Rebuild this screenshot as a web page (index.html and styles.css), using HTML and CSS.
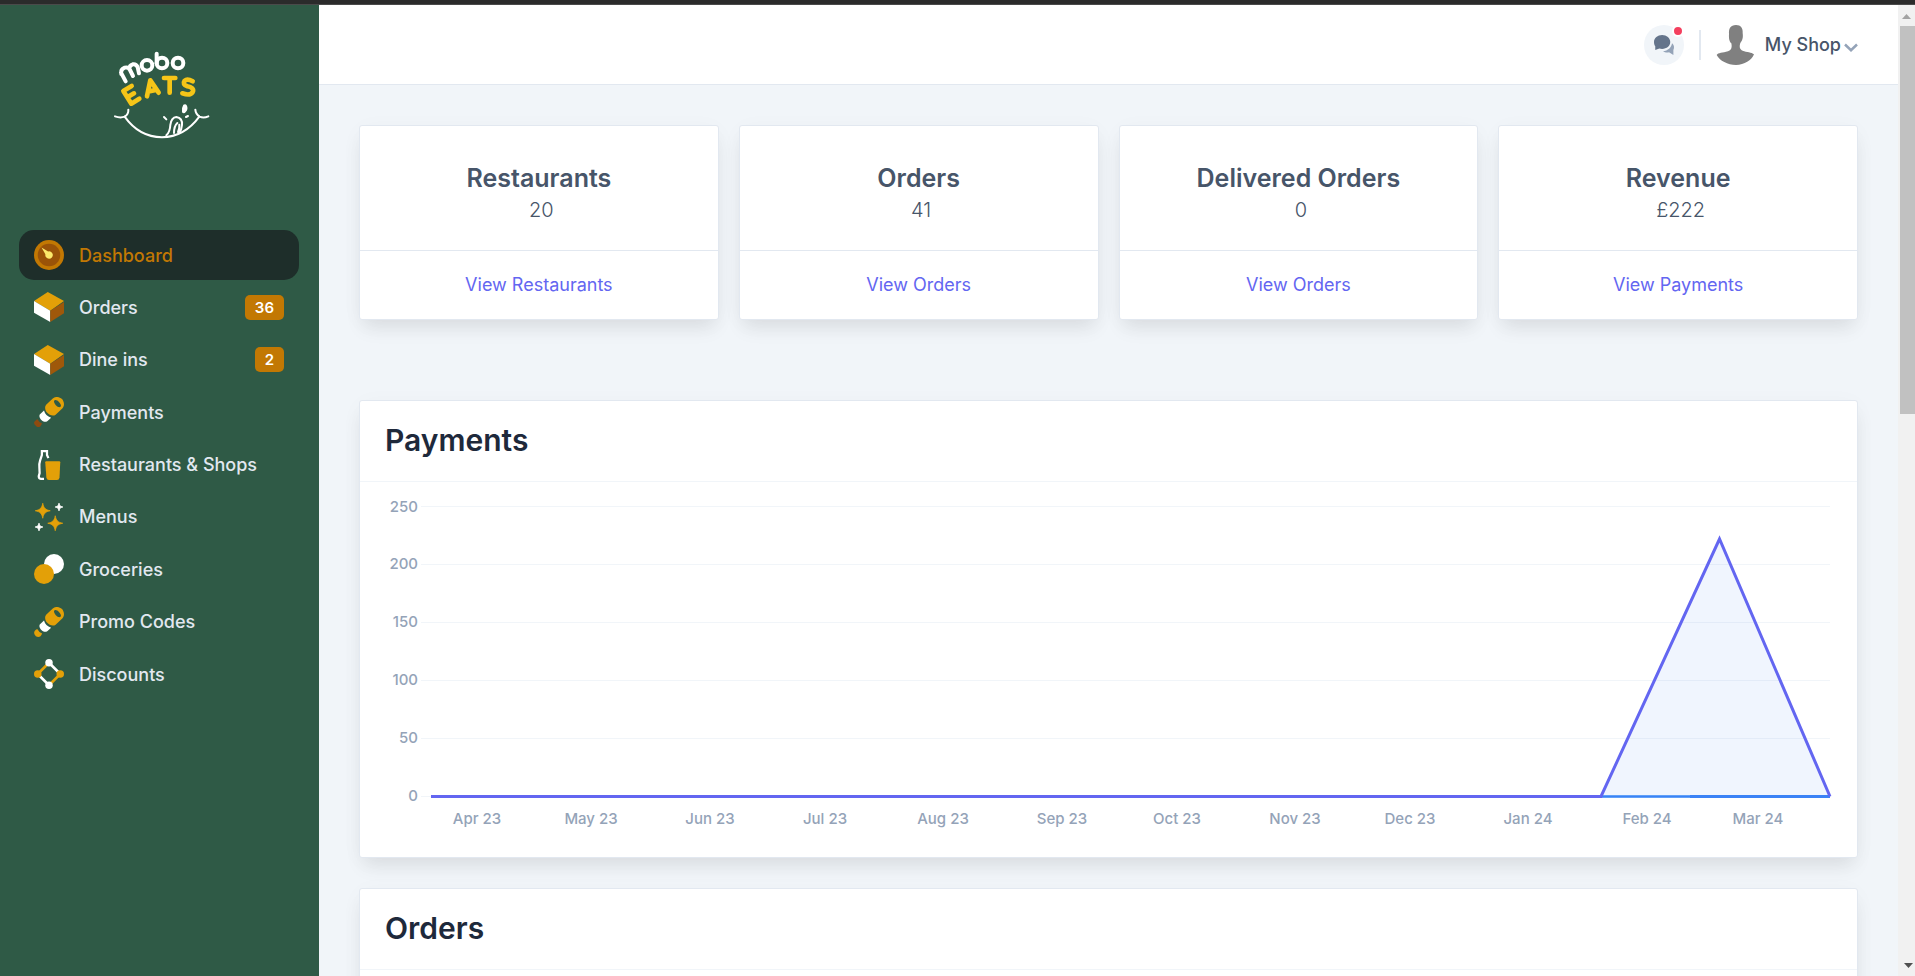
FILE: index.html
```html
<!DOCTYPE html>
<html lang="en">
<head>
<meta charset="utf-8">
<title>Mobo Eats – Dashboard</title>
<link rel="stylesheet" href="styles.css">
</head>
<body>
<div class="window-edge"></div>
<div class="app">
  <aside class="sidebar">
    <a class="logo" href="#" aria-label="mobo eats">
      <svg width="150" height="130" viewBox="0 0 450 390" fill="none" stroke-linecap="round" stroke-linejoin="round">
        <g stroke="#fff" stroke-width="12">
          <path d="M107 154 93 128M94 132q-3-14 10-19q11-3 16 7l9 18M118 116q0-10 10-13q10-2 15 8l4 19"/>
          <circle cx="171" cy="106" r="16"/>
          <path d="M200 71V100"/>
          <circle cx="216" cy="99" r="16"/>
          <circle cx="264" cy="99" r="16"/>
        </g>
        <g stroke="#f5c518" stroke-width="14">
          <path d="M125 168 100 183 124 221 148 206M112 202 132 190"/>
          <path d="M171 199 181 151 206 188M176 184 198 180"/>
          <path d="M222 144H256M239 144V188"/>
          <path d="M308 154q-16-9-24-2q-8 12 8 17q20 4 17 15q-5 15-32 6"/>
        </g>
        <g stroke="#fff" stroke-width="6">
          <path d="M75 259q16 6 29 1q12-7 11-21M316 239q1 14 13 21q12 5 26-1"/>
          <path d="M104 260q43 61 112 62q67-1 112-62"/>
          <path d="M229 316q11-10 12-31q3-23 18-24q19 3 17 24q-1 14-8 23M252 309q0-21 10-30M264 306q5-10 4-22"/>
          <path d="M222 261 229 268M288 261 294 258"/>
        </g>
        <path d="M280 224q7-4 11 3q4 11-3 18q-6 8-12 2q-2-14 4-23z" fill="#fff"/>
      </svg>
    </a>
    <nav class="nav" aria-label="Main">
      <a class="nav-item active" href="#">
        <svg class="icon" viewBox="0 0 24 24"><circle cx="12" cy="12" r="12" fill="#c27803"/><circle cx="12" cy="12" r="9" fill="#9a5308"/><path d="M12 15a3 3 0 0 1-2.900-3.700L6 6l5.300 3.100A3 3 0 1 1 12 15z" fill="#fce96a"/></svg>
        <span>Dashboard</span></a>
      <a class="nav-item" href="#">
        <svg class="icon" viewBox="0 0 24 24"><path d="M13 15 0 7.200 11 0 24 7.200z" fill="#e3a008"/><path d="M13 24 0 16.500V7.100L13 15z" fill="#fff"/><path d="M13 15 24 7.900v9L13 24z" fill="#9f580a"/></svg>
        <span>Orders</span><b class="count">36</b></a>
      <a class="nav-item" href="#">
        <svg class="icon" viewBox="0 0 24 24"><path d="M13 15 0 7.200 11 0 24 7.200z" fill="#e3a008"/><path d="M13 24 0 16.500V7.100L13 15z" fill="#fff"/><path d="M13 15 24 7.900v9L13 24z" fill="#9f580a"/></svg>
        <span>Dine ins</span><b class="count">2</b></a>
      <a class="nav-item" href="#">
        <svg class="icon" viewBox="0 0 24 24"><path d="M6.500 21.100 5 23.500Q3.500 24.500 2 23.500L.5 22Q-.5 20.500.5 19.500L2.600 17.600a7 7 0 0 0 3.900 3.500z" fill="#8e4b10"/><path d="M4.600 14 8 10.800a8 8 0 0 0 5.700 5.700L10.600 19.300a3 3 0 0 1-3 .3C5.600 18.400 3.600 16.300 4.600 14z" fill="#fff"/><path fill-rule="evenodd" d="M22.400 1.600C20 -.4 17 -.6 15 1.200L9.700 6.100c-1.800 2.300-.3 5.300.9 6.500 1.500 1.800 4.700 3.200 6.700 1.500L22.800 9c2-2.400 1.200-5.500-.4-7.400zM21.200 7.800c-.9.900-2.600-.2-3.700-1.300-1.100-1.200-2-3-1.200-3.700.9-.8 2.700.1 3.800 1.300 1.100 1.100 2 2.800 1.100 3.700z" fill="#e3a008"/></svg>
        <span>Payments</span></a>
      <a class="nav-item" href="#">
        <svg class="icon" viewBox="0 0 24 24"><path d="M11.500 6.500 10.400 4V.9H6.300V4L4.900 8.300Q4 11 4.300 14l.2 4.500-.7 2.500q0 1.700 1.400 2H8" fill="none" stroke="#fff" stroke-width="1.800"/><path d="M9 9.800q0-.8.800-.8H20.200q.8 0 .8.800L20.400 22q-.3 2-2 2H12q-1.800 0-2.100-2z" fill="#e3a008"/></svg>
        <span>Restaurants &amp; Shops</span></a>
      <a class="nav-item" href="#">
        <svg class="icon" viewBox="0 0 24 24"><path d="M7 1c.7 3.800 2.200 5.300 6 6-3.800.7-5.300 2.200-6 6-.7-3.800-2.200-5.300-6-6 3.800-.7 5.300-2.200 6-6zM17 11c.7 3.800 2.200 5.300 6 6-3.800.7-5.300 2.200-6 6-.7-3.800-2.200-5.300-6-6 3.800-.7 5.300-2.200 6-6z" fill="#e3a008" stroke="#e3a008" stroke-width=".6"/><path d="M20 1c.4 2.100.9 2.600 3 3-2.100.4-2.600.9-3 3-.4-2.100-.9-2.600-3-3 2.100-.4 2.600-.9 3-3zM4 17c.4 2.100.9 2.600 3 3-2.100.4-2.600.9-3 3-.4-2.100-.9-2.600-3-3 2.100-.4 2.600-.9 3-3z" fill="#fff" stroke="#fff" stroke-width=".8"/></svg>
        <span>Menus</span></a>
      <a class="nav-item" href="#">
        <svg class="icon" viewBox="0 0 24 24"><circle cx="16" cy="8" r="8" fill="#fff"/><circle cx="8" cy="16" r="8" fill="#e3a008"/></svg>
        <span>Groceries</span></a>
      <a class="nav-item" href="#">
        <svg class="icon" viewBox="0 0 24 24"><path d="M6.500 21.100C5.500 24 3.500 24.500 1.500 23.300-.5 21.500-.5 19 2.600 17.600a7 7 0 0 0 3.900 3.500z" fill="#e3a008"/><path d="M4.600 14 8 10.800a8 8 0 0 0 5.700 5.700L10.600 19.300a3 3 0 0 1-3 .3C5.600 18.400 3.600 16.300 4.600 14z" fill="#fff"/><path fill-rule="evenodd" d="M22.400 1.600C20 -.4 17 -.6 15 1.200L9.700 6.100c-1.800 2.300-.3 5.300.9 6.500 1.500 1.800 4.700 3.200 6.700 1.500L22.800 9c2-2.400 1.200-5.500-.4-7.400zM21.200 7.800c-.9.900-2.600-.2-3.700-1.300-1.100-1.200-2-3-1.200-3.700.9-.8 2.700.1 3.800 1.300 1.100 1.100 2 2.800 1.100 3.700z" fill="#e3a008"/></svg>
        <span>Promo Codes</span></a>
      <a class="nav-item" href="#">
        <svg class="icon" viewBox="0 0 24 24"><path d="M3 12 12 3M12 21l9-9" stroke="#e3a008" stroke-width="2"/><path d="M12 3l9 9M3 12l9 9" stroke="#fff" stroke-width="2"/><circle cx="3" cy="12" r="3" fill="#e3a008"/><circle cx="21" cy="12" r="3" fill="#e3a008"/><circle cx="12" cy="3" r="3" fill="#fff"/><circle cx="12" cy="21" r="3" fill="#fff"/></svg>
        <span>Discounts</span></a>
    </nav>
  </aside>

  <div class="content">
    <header class="topbar">
      <button class="chat" type="button" aria-label="Messages">
        <svg width="20" height="20" viewBox="0 0 16 16"><path d="M6.500 0C2.900 0 0 2.500 0 5.600c0 1.500.4 2.600 1 3.400L1 12l3.300-1.200c.7.200 1.400.3 2.200.3 3.600 0 6.500-2.400 6.500-5.500S10.100 0 6.500 0z" fill="#64748b"/><path d="M16 9.500c0-1.100-.6-2.200-1.600-3-.4 3.300-3.300 6-7.200 6.500.9.600 2.200 1 3.500 1 .5 0 .9-.1 1.300-.2L15.500 16V12c.4-.7.500-1.700.5-2.500z" fill="#94a3b8"/></svg>
        <span class="dot"></span>
      </button>
      <span class="rule"></span>
      <button class="account" type="button">
        <svg width="40" height="40" viewBox="0 0 120 120"><path d="M60 0c-17 0-22 12-21 26-1 18 2 23 7 29 3 14-1 21-10 24-16 5-30 4-34 11 9 17 33 30 58 30s47-14 54-32c-7-7-22-6-34-11-8-3-11-11-7-23 6-8 9-15 7-30C81 10 75 0 60 0z" fill="#808080"/></svg>
        <span>My Shop</span>
        <svg class="caret" width="14" height="9" viewBox="0 0 14 9"><path d="M1 1.500 7 7.200 13 1.500" fill="none" stroke="#94a3b8" stroke-width="2.500"/></svg>
      </button>
    </header>

    <main class="main">
      <section class="stats">
        <article class="card stat"><div class="stat-body"><h2>Restaurants</h2><p>20</p></div><div class="stat-foot"><a href="#">View Restaurants</a></div></article>
        <article class="card stat"><div class="stat-body"><h2>Orders</h2><p>41</p></div><div class="stat-foot"><a href="#">View Orders</a></div></article>
        <article class="card stat"><div class="stat-body"><h2>Delivered Orders</h2><p>0</p></div><div class="stat-foot"><a href="#">View Orders</a></div></article>
        <article class="card stat"><div class="stat-body"><h2>Revenue</h2><p>£222</p></div><div class="stat-foot"><a href="#">View Payments</a></div></article>
      </section>

      <section class="card panel">
        <h2 class="panel-title">Payments</h2>
        <svg class="chart" viewBox="0 0 1497 375" role="img" aria-label="Payments by month">
          <path class="grid" d="M61 24.500H1470M61 82.500H1470M61 140.500H1470M61 198.500H1470M61 256.500H1470M61 314.500H1470"/>
          <g class="y-labels">
            <text x="58" y="30">250</text><text x="58" y="87">200</text><text x="58" y="145">150</text><text x="58" y="203">100</text><text x="58" y="261">50</text><text x="58" y="319">0</text>
          </g>
          <path d="M1241 314.500 1359.500 57 1470 314.500z" fill="#3b82f6" fill-opacity=".08"/>
          <path d="M1241 314.500H1330" stroke="#60a0f8" stroke-width="3"/>
          <path d="M1241 314.500H1470" stroke="#3b82f6" stroke-width="1"/>
          <path d="M1330 314.500H1470" stroke="#3b82f6" stroke-width="3"/>
          <path class="series" d="M71 314.500H1241L1359.500 57 1470 314.500"/>
          <g class="x-labels">
            <text x="117" y="342">Apr 23</text><text x="231" y="342">May 23</text><text x="350" y="342">Jun 23</text><text x="465" y="342">Jul 23</text><text x="583" y="342">Aug 23</text><text x="702" y="342">Sep 23</text><text x="817" y="342">Oct 23</text><text x="935" y="342">Nov 23</text><text x="1050" y="342">Dec 23</text><text x="1168" y="342">Jan 24</text><text x="1287" y="342">Feb 24</text><text x="1398" y="342">Mar 24</text>
          </g>
        </svg>
      </section>

      <section class="card panel">
        <h2 class="panel-title">Orders</h2>
        <div class="panel-body"></div>
      </section>
    </main>
  </div>

  <div class="scrollbar" aria-hidden="true">
    <svg width="17" height="21" viewBox="0 0 17 21"><path d="M4 14 8.500 9 13 14z" fill="#a3a3a3"/></svg>
    <div class="thumb"></div>
    <svg class="down" width="17" height="17" viewBox="0 0 17 17"><path d="M6 4H15L10.500 9z" fill="#505050"/></svg>
  </div>
</div>
</body>
</html>
```
FILE: styles.css
```css
* { box-sizing: border-box; }

body {
  margin: 0;
  height: 100vh;
  display: flex;
  flex-direction: column;
  overflow: hidden;
  background: #f1f5f9;
  color: #475569;
  font: 400 18px/28px Inter, "Liberation Sans", sans-serif;
}

h2, p { margin: 0; }
a { color: inherit; text-decoration: none; }
button { border: 0; padding: 0; background: none; font: inherit; color: inherit; }

.window-edge {
  flex: none;
  height: 5px;
  background: #2b2b2b;
  border-bottom: 1px solid #4a4a4a;
}

.app { flex: 1; display: flex; min-height: 0; }

/* Sidebar */
.sidebar {
  flex: none;
  width: 319px;
  padding: 25px 20px 0 19px;
  background: #2f5a46;
}

.logo { display: block; height: 200px; padding-left: 71px; }
.logo svg { display: block; }

.nav {
  display: flex;
  flex-direction: column;
  justify-content: space-between;
  min-height: 469px;
}

.nav-item {
  display: flex;
  align-items: center;
  gap: 15px;
  height: 50px;
  padding: 0 15px;
  border-radius: 15px;
  color: #e2e8f0;
  font-weight: 500;
}

.nav-item.active { background: #1e2e2a; color: #c27803; }
.nav-item span { padding-top: 1px; }
.icon { flex: none; width: 30px; height: 30px; }

.count {
  margin-left: auto;
  padding: 0 10px;
  border-radius: 5px;
  background: #c27803;
  color: #fff;
  font-size: 15px;
  line-height: 25px;
  font-weight: 600;
}

/* Header */
.content { flex: 1; min-width: 0; overflow: hidden; }

.topbar {
  display: flex;
  align-items: center;
  justify-content: flex-end;
  height: 80px;
  padding: 0 40px;
  background: #fff;
  border-bottom: 1px solid #e2e8f0;
}

.chat {
  position: relative;
  display: grid;
  place-items: center;
  width: 40px;
  height: 40px;
  border-radius: 50%;
  background: #f1f5f9;
}

.dot {
  position: absolute;
  top: 0;
  right: 0;
  width: 12px;
  height: 12px;
  border: 2px solid #fff;
  border-radius: 50%;
  background: #f43f5e;
}

.rule { width: 2px; height: 30px; margin: 0 15px; background: #e2e8f0; }
.account { display: flex; align-items: center; font-weight: 500; }
.account span { margin: 0 3px 0 9px; }
.caret { margin-top: 5px; }

/* Cards */
.main { padding: 40px; }

.card {
  background: #fff;
  border: 1px solid #e2e8f0;
  border-radius: 3px;
  box-shadow: 0 12px 18px -4px rgb(0 0 0 / 8%), 0 4px 24px -2px rgb(0 0 0 / 4%);
}

.stats {
  display: grid;
  grid-template-columns: repeat(4, 1fr);
  gap: 20px;
  margin-bottom: 80px;
  text-align: center;
}

.stat-body { padding: 35px 20px 26px; border-bottom: 1px solid #e2e8f0; }
.stat-body h2 { font-size: 25px; line-height: 35px; font-weight: 600; }
.stat-body p { padding-left: 5px; font-size: 20px; line-height: 28px; font-weight: 300; }
.stat-foot { padding: 20px; color: #6366f1; }
.stat-foot a { display: block; }

.panel { margin-bottom: 30px; }

.panel-title {
  padding: 19px 25px 21px;
  border-bottom: 1px solid #f1f5f9;
  color: #1e293b;
  font-size: 30px;
  line-height: 40px;
  font-weight: 600;
}

.panel-body { height: 375px; }

/* Chart */
.chart { display: block; width: 100%; height: auto; }
.chart text { fill: #94a3b8; font-size: 15px; font-weight: 500; }
.grid { stroke: #f1f5f9; }
.series { fill: none; stroke: #6366f1; stroke-width: 3; }
.y-labels { text-anchor: end; }
.x-labels { text-anchor: middle; }

/* Scroll bar */
.scrollbar {
  flex: none;
  display: flex;
  flex-direction: column;
  width: 17px;
  background: #f1f1f1;
}

.scrollbar svg { display: block; flex: none; }
.thumb { height: 40%; margin-left: 2px; background: #c1c1c1; }
.down { margin-top: auto; }
```
